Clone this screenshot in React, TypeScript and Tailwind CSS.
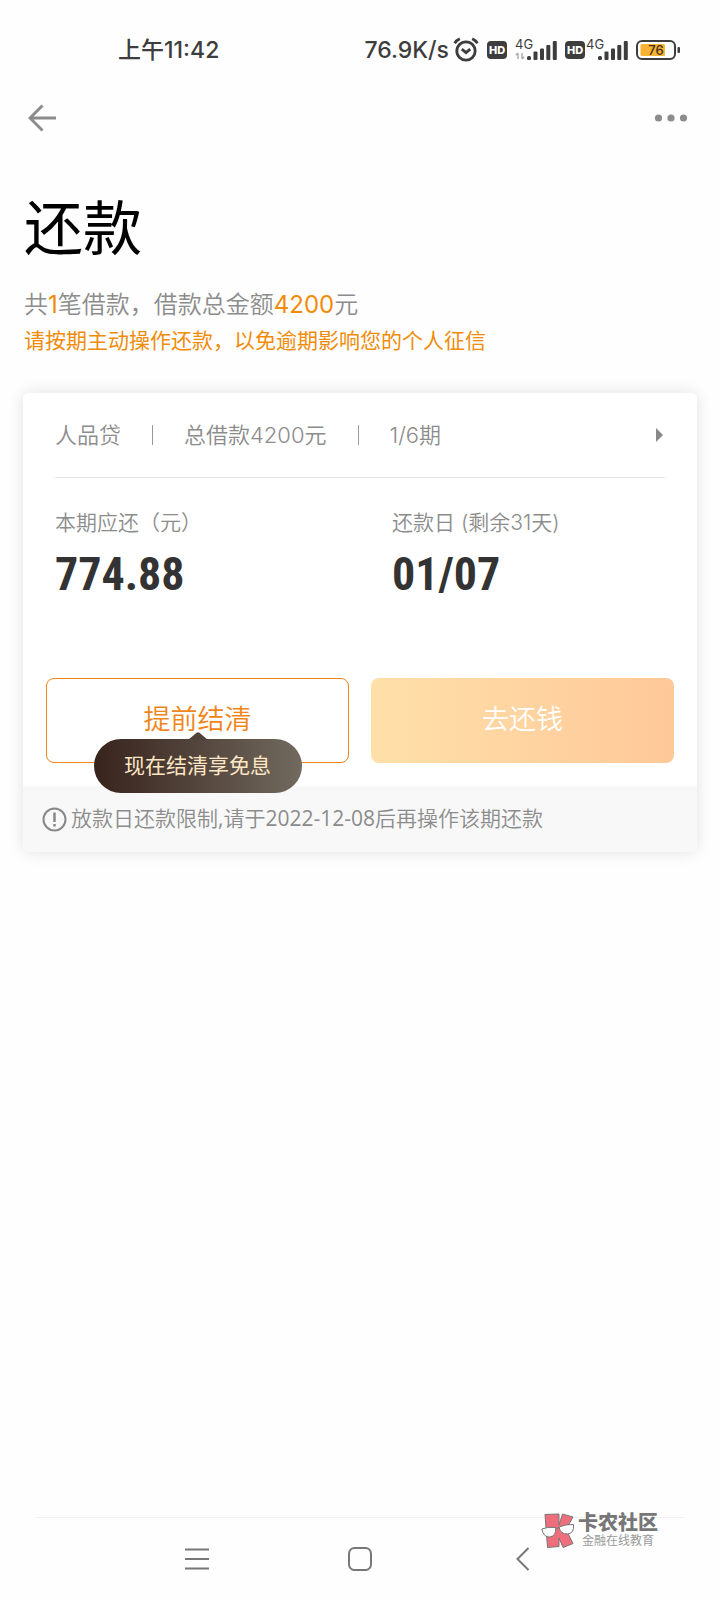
import React from "react";

function AlarmIcon() {
  return (
    <svg width="26" height="26" viewBox="0 0 26 26" fill="none" stroke="#3d3d3d" strokeWidth="2.800" aria-hidden="true">
      <circle cx="13" cy="14" r="9.200" />
      <path d="M8.800 12.200 13 15.600l4.200-3.400" />
      <path d="M1.600 6.200Q3.400 3.200 6.800 1.700M24.400 6.200Q22.600 3.200 19.200 1.700" />
    </svg>
  );
}

function HdBadge() {
  return (
    <span className="flex h-[18px] w-5 items-center justify-center rounded bg-[#3d3d3d] text-[11px] leading-none font-extrabold text-white">
      HD
    </span>
  );
}

function Signal({ transfer = false }: { transfer?: boolean }) {
  return (
    <div className="relative flex h-6 w-[42px] items-end">
      <span className="absolute -top-0.5 left-0 text-[13px] leading-4 font-normal">4G</span>
      <svg width="42" height="22" viewBox="0 0 42 22" aria-hidden="true">
        {transfer && (
          <path d="M3 19v-6M.8 15.300 3 13M7 13v6M9.200 16.700 7 19" stroke="#aaa" strokeWidth="1.400" fill="none" />
        )}
        <g fill="#3d3d3d">
          <rect x="12" y="16" width="4" height="4" rx="1.500" />
          <rect x="18.500" y="11.500" width="4" height="8.500" rx="1" />
          <rect x="25" y="8.500" width="4" height="11.500" rx="1" />
          <rect x="31.300" y="5" width="4" height="15" rx="1" />
          <rect x="37.800" y="1" width="4" height="19" rx="1" />
        </g>
      </svg>
    </div>
  );
}

function Battery() {
  return (
    <svg width="44" height="20" viewBox="0 0 44 20" role="img" aria-label="76%">
      <rect x="1" y="1" width="38" height="18" rx="5" fill="#fff" stroke="#3d3d3d" strokeWidth="2" />
      <rect x="4.500" y="4" width="24.500" height="12" rx="1.500" fill="#f9b233" />
      <rect x="41.500" y="7" width="2.500" height="6" rx="1" fill="#3d3d3d" />
      <text x="20" y="15" textAnchor="middle" fontSize="13" fontWeight="500" fontFamily="Inter, sans-serif" fill="#3d3020">76</text>
    </svg>
  );
}

function StatusBar() {
  return (
    <div className="flex h-[100px] items-center justify-between pr-10 pl-[118px] text-[23px] font-medium text-[#3d3d3d]">
      <span>上午11:42</span>
      <div className="flex items-center">
        <span className="mr-1">76.9K/s</span>
        <AlarmIcon />
        <span className="ml-2"><HdBadge /></span>
        <span className="ml-2"><Signal transfer /></span>
        <span className="ml-2"><HdBadge /></span>
        <span className="ml-px"><Signal /></span>
        <span className="ml-2"><Battery /></span>
      </div>
    </div>
  );
}

function Header() {
  return (
    <header className="flex h-9 items-center justify-between px-7">
      <button aria-label="返回">
        <svg width="29" height="28" viewBox="0 0 29 28" fill="none" stroke="#8c8c8c" strokeWidth="3" aria-hidden="true">
          <path d="M14.500 1.500 2 14l12.500 12.500M2 14H28" />
        </svg>
      </button>
      <button aria-label="更多">
        <svg width="38" height="8" viewBox="0 0 38 8" fill="#8c8c8c" aria-hidden="true">
          <circle cx="4.500" cy="4" r="3.600" />
          <circle cx="17" cy="4" r="3.600" />
          <circle cx="29.500" cy="4" r="3.600" />
        </svg>
      </button>
    </header>
  );
}

function Divider() {
  return <span className="h-5 w-px bg-[#999]" />;
}

function Figure({ label, value }: { label: string; value: string }) {
  return (
    <div>
      <dt className="text-[21px] leading-8 font-[350] text-[#8c8c8c]">{label}</dt>
      <dd className="mt-2 font-['Roboto_Condensed','Liberation_Sans_Narrow',sans-serif] text-[46px] leading-[54px] font-bold text-[#333]">
        {value}
      </dd>
    </div>
  );
}

function LoanCard() {
  return (
    <section className="mx-[23px] mt-[34px] rounded-md bg-white shadow-[0_0_16px_rgba(0,0,0,0.12)]">
      <a href="#detail" className="mx-8 flex h-[85px] items-center gap-[31px] border-b border-[#e5e5e5] text-[22px] font-[350] text-[#8c8c8c]">
        <span>人品贷</span>
        <Divider />
        <span>总借款4200元</span>
        <Divider />
        <span>1/6期</span>
        <svg className="mr-0.5 ml-auto" width="7" height="14" viewBox="0 0 7 14" fill="#888" aria-hidden="true">
          <path d="M0 0 7 7 0 14Z" />
        </svg>
      </a>
      <dl className="grid grid-cols-2 px-8 pt-[29px] pb-[77px]">
        <Figure label="本期应还（元）" value="774.88" />
        <div className="pl-8">
          <Figure label="还款日 (剩余31天)" value="01/07" />
        </div>
      </dl>
      <div className="grid grid-cols-2 gap-[22px] px-[23px] pb-[23px] text-[27px]">
        <div className="relative">
          <button className="h-[85px] w-full rounded-lg border border-[#f08519] font-[350] text-[#f08519]">提前结清</button>
          <div role="tooltip" className="absolute top-[61px] left-1/2 flex h-[54px] w-52 -translate-x-1/2 items-center justify-center rounded-full bg-linear-to-r from-[#38241d] to-[#716a5f] text-[21px] text-[#fde6c4]">
            <svg className="absolute -top-[7px] left-1/2 -translate-x-1/2" width="20" height="8" viewBox="0 0 20 8" fill="#504238" aria-hidden="true">
              <path d="M0 8 8.500.7q1.500-1 3 0L20 8Z" />
            </svg>
            现在结清享免息
          </div>
        </div>
        <button className="h-[85px] rounded-lg bg-linear-to-r from-[#ffe0a8] to-[#ffc899] font-[350] text-white">去还钱</button>
      </div>
      <p className="flex h-[66px] items-center gap-1 rounded-b-md bg-[#f8f8f8] px-[19px] font-['Open_Sans','Noto_Sans_CJK_SC',sans-serif] text-[21px] font-[350] text-[#8c8c8c]">
        <svg width="25" height="25" viewBox="0 0 25 25" fill="none" stroke="#888" strokeWidth="2" aria-hidden="true">
          <circle cx="12.500" cy="12.500" r="11" />
          <path d="M12.500 5.500v9.500M12.500 17v2.500" strokeWidth="2.500" />
        </svg>
        <span>
          放款日还款限制<span className="font-normal">,</span>请于
          <time dateTime="2022-12-08" className="font-normal">2022-12-08</time>
          后再操作该期还款
        </span>
      </p>
    </section>
  );
}

function Watermark() {
  return (
    <div className="absolute right-[62px] bottom-[51px] flex items-center gap-[3px] text-[#777]">
      <svg width="34" height="36" viewBox="0 0 34 36" strokeLinejoin="round" stroke="#777" strokeWidth="1" aria-hidden="true">
        <path d="M4 1.500 18 1v11L21.500 1 32 4 25 16.500l7 14-10 4L18 25v8.500L6.500 34.500Z" fill="#ee6f7b" />
        <path d="M.8 16q6-2.500 14-1.500.5 8.500-6 9.500Q2.500 24.500.8 16ZM18 14q6.500-3 14.500-2.500 1 8.500-5.500 9.500-7.500.5-9-7Z" fill="#fff" />
        <path d="M14.800 15.500 18 14.500" fill="none" />
      </svg>
      <div className="flex flex-col items-center">
        <strong className="text-xl leading-5 font-black">卡农社区</strong>
        <span className="text-xs leading-4 text-[#999]">金融在线教育</span>
      </div>
    </div>
  );
}

function NavigationBar() {
  return (
    <nav className="relative mt-auto">
      <div className="mx-[35px] h-px bg-[#f2f2f2]" />
      <div className="flex h-[82px] items-center justify-center gap-[139px]">
        <button aria-label="最近任务">
          <svg width="24" height="24" viewBox="0 0 24 24" stroke="#777" strokeWidth="2" aria-hidden="true">
            <path d="M0 2.500h24M0 12h24M0 21.500h24" />
          </svg>
        </button>
        <button aria-label="主屏幕">
          <svg width="24" height="24" viewBox="0 0 24 24" fill="none" stroke="#777" strokeWidth="2" aria-hidden="true">
            <rect x="1" y="1" width="22" height="22" rx="5.500" />
          </svg>
        </button>
        <button aria-label="返回上一页">
          <svg width="24" height="24" viewBox="0 0 24 24" fill="none" stroke="#777" strokeWidth="2" aria-hidden="true">
            <path d="M17.500 1 6.500 12l11 11" />
          </svg>
        </button>
      </div>
      <Watermark />
    </nav>
  );
}

export default function App() {
  return (
    <div className="flex min-h-screen flex-col bg-[#fefefe] font-['Inter','Noto_Sans_CJK_SC',sans-serif]">
      <StatusBar />
      <Header />
      <main className="pb-10">
        <div className="px-6 pt-14">
          <h1 className="text-[59px] leading-[74px] text-black">还款</h1>
          <p className="mt-[21px] text-2xl leading-9 font-[350] text-[#8c8c8c]">
            共<span className="font-normal text-[#f08c0a]">1</span>笔借款，借款总金额
            <span className="font-normal text-[#f08c0a]">4200</span>元
          </p>
          <p className="text-[21px] leading-9 text-[#f08c0a]">请按期主动操作还款，以免逾期影响您的个人征信</p>
        </div>
        <LoanCard />
      </main>
      <NavigationBar />
    </div>
  );
}
